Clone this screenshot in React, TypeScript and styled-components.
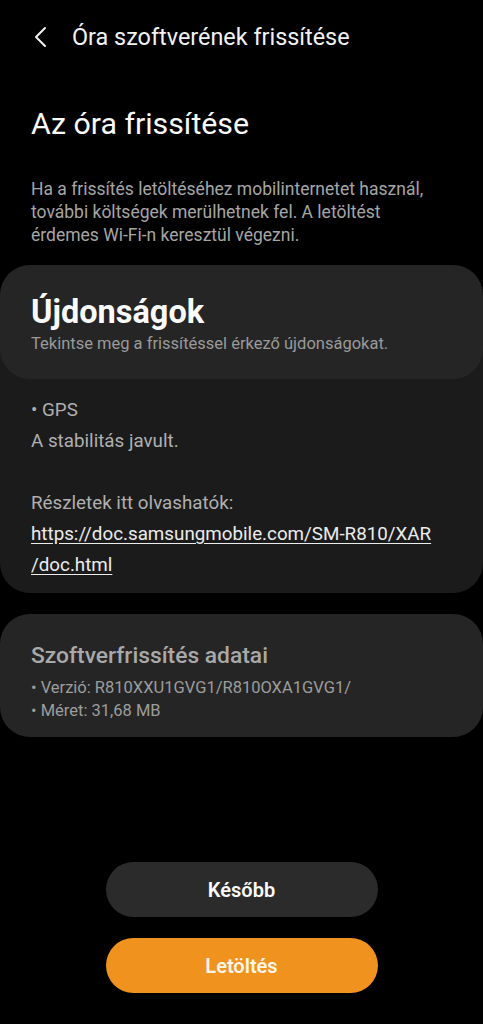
import styled, { createGlobalStyle } from 'styled-components'

const Global = createGlobalStyle`
  body {
    margin: 0;
    background: #000;
    font-family: Roboto, "Noto Sans", "Liberation Sans", sans-serif;
    color: #fff;
  }
`

const Page = styled.div`
  min-height: 1024px;
  display: flex;
  flex-direction: column;
  background: #000;
`

const Header = styled.div`
  height: 74px;
  display: flex;
  align-items: center;
  padding-left: 33px;
  gap: 23px;
`

const Back = styled.svg`
  width: 16px;
  height: 22px;
  flex-shrink: 0;
`

const HeaderTitle = styled.div`
  font-size: 23.4px;
  color: #f2f2f2;
`

const Intro = styled.div`
  padding: 0 31px;
`

const PageTitle = styled.h1`
  margin: 30px 0 0;
  font-size: 30.3px;
  font-weight: 400;
  line-height: 40px;
  color: #fafafa;
`

const Note = styled.p`
  margin: 34px 0 0;
  font-size: 17.5px;
  line-height: 23px;
  color: #a6a6a6;
`

const Card = styled.div`
  background: #1b1b1b;
  border-radius: 30px;
  margin-top: 18px;
  overflow: hidden;
`

const CardHead = styled.div`
  background: #252525;
  border-radius: 30px;
  padding: 28px 31px 24px;
`

const CardTitle = styled.div`
  font-size: 32.5px;
  font-weight: 700;
  line-height: 38px;
  color: #fafafa;
`

const CardSub = styled.div`
  font-size: 16.5px;
  line-height: 22px;
  color: #9a9a9a;
  margin-top: 2px;
`

const CardBody = styled.div`
  padding: 16px 31px 12px;
  font-size: 18.8px;
  line-height: 31px;
  color: #b0b0b0;
`

const Link = styled.a`
  color: #ececec;
  text-decoration: underline;
  text-underline-offset: 3px;
`

const Info = styled.div`
  background: #252525;
  border-radius: 30px;
  margin-top: 21px;
  padding: 27px 31px 15px;
`

const InfoTitle = styled.div`
  font-size: 22.8px;
  font-weight: 500;
  line-height: 30px;
  color: #a9a9a9;
  margin-bottom: 5px;
`

const InfoLine = styled.div`
  font-size: 16.5px;
  line-height: 23px;
  color: #9d9d9d;
`

const Spacer = styled.div`
  flex: 1;
`

const Buttons = styled.div`
  display: flex;
  flex-direction: column;
  align-items: center;
  gap: 21px;
  padding-bottom: 31px;
`

const Button = styled.button`
  width: 272px;
  height: 55px;
  border: none;
  border-radius: 28px;
  background: ${p => (p.$primary ? '#f0921e' : '#2b2b2b')};
  color: ${p => (p.$primary ? '#fff6ea' : '#fafafa')};
  font-family: inherit;
  font-size: 20px;
  font-weight: 600;
`

export default function App() {
  return (
    <Page>
      <Global />
      <Header>
        <Back viewBox="0 0 16 22">
          <path d="M12 2 L3 11 L12 20" fill="none" stroke="#f2f2f2" strokeWidth="2" strokeLinecap="round" strokeLinejoin="round" />
        </Back>
        <HeaderTitle>Óra szoftverének frissítése</HeaderTitle>
      </Header>
      <Intro>
        <PageTitle>Az óra frissítése</PageTitle>
        <Note>
          Ha a frissítés letöltéséhez mobilinternetet használ, további költségek merülhetnek fel. A letöltést
          érdemes Wi-Fi-n keresztül végezni.
        </Note>
      </Intro>
      <Card>
        <CardHead>
          <CardTitle>Újdonságok</CardTitle>
          <CardSub>Tekintse meg a frissítéssel érkező újdonságokat.</CardSub>
        </CardHead>
        <CardBody>
          <div>• GPS</div>
          <div>A stabilitás javult.</div>
          <div>&nbsp;</div>
          <div>Részletek itt olvashatók:</div>
          <Link href="#">https://doc.samsungmobile.com/SM-R810/XAR<br />/doc.html</Link>
        </CardBody>
      </Card>
      <Info>
        <InfoTitle>Szoftverfrissítés adatai</InfoTitle>
        <InfoLine>• Verzió: R810XXU1GVG1/R810OXA1GVG1/</InfoLine>
        <InfoLine>• Méret: 31,68 MB</InfoLine>
      </Info>
      <Spacer />
      <Buttons>
        <Button>Később</Button>
        <Button $primary>Letöltés</Button>
      </Buttons>
    </Page>
  )
}
